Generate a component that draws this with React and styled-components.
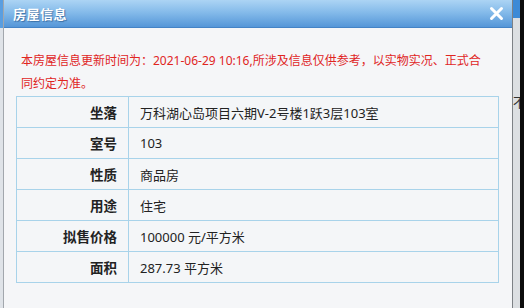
import styled, { createGlobalStyle } from "styled-components";

const GlobalStyle = createGlobalStyle`
  html, body {
    margin: 0;
    padding: 0;
    height: 100%;
    overflow: hidden;
  }
  body {
    font-family: "Noto Sans", "Noto Sans CJK SC", sans-serif;
    background: #e9ecef;
  }
`;

const rows = [
  { label: "坐落", value: "万科湖心岛项目六期V-2号楼1跃3层103室" },
  { label: "室号", value: "103" },
  { label: "性质", value: "商品房" },
  { label: "用途", value: "住宅" },
  { label: "拟售价格", value: "100000 元/平方米" },
  { label: "面积", value: "287.73 平方米" },
];

const CloseIcon = () => (
  <svg width="15" height="15" viewBox="0 0 15 15">
    <path
      d="M2.5 2.5 L12.5 12.5 M12.5 2.5 L2.5 12.5"
      stroke="#fff"
      strokeWidth="3"
      strokeLinecap="round"
    />
  </svg>
);

const App = () => {
  return (
    <>
      <GlobalStyle />
      <Page>
        <LeftEdge />
        <Dialog>
          <TitleBar>
            <Title>房屋信息</Title>
            <CloseButton>
              <CloseIcon />
            </CloseButton>
          </TitleBar>
          <Body>
            <Notice>
              本房屋信息更新时间为：2021-06-29 10:16,所涉及信息仅供参考，以实物实况、正式合
              <br />
              同约定为准。
            </Notice>
            <InfoTable>
              <tbody>
                {rows.map((row) => (
                  <tr key={row.label}>
                    <Label>{row.label}</Label>
                    <Value>{row.value}</Value>
                  </tr>
                ))}
              </tbody>
            </InfoTable>
          </Body>
        </Dialog>
        <SideStrip>
          <SideTop />
          <SideGlyph>不</SideGlyph>
        </SideStrip>
        <DarkBar />
      </Page>
    </>
  );
};

const Page = styled.div`
  display: flex;
  height: 308px;
  width: 524px;
`;

const LeftEdge = styled.div`
  width: 3px;
  background: linear-gradient(to bottom, #5a9ee0 0, #5a9ee0 28px, #dfe3e8 28px);
`;

const Dialog = styled.div`
  width: 508px;
  display: flex;
  flex-direction: column;
  background: #f5f6f8;
  border-left: 1px solid #a2a7ad;
  border-right: 1px solid #7d8185;
`;

const TitleBar = styled.div`
  height: 27px;
  display: flex;
  align-items: center;
  justify-content: space-between;
  padding: 0 8px 0 9px;
  background: linear-gradient(to bottom, #acd4f4 0%, #85bbea 45%, #5596d8 100%);
  border-bottom: 1px solid #4483c6;
`;

const Title = styled.span`
  color: #fff;
  font-size: 13px;
  font-weight: bold;
  text-shadow: 1px 1px 1px #3b6fa5;
  letter-spacing: 0.5px;
`;

const CloseButton = styled.span`
  display: flex;
  align-items: center;
  margin-top: -1px;
`;

const Body = styled.div`
  padding: 21px 12px 0 12px;
`;

const Notice = styled.p`
  margin: 0 0 1px 0;
  padding-left: 5px;
  color: #e0251f;
  font-size: 12px;
  line-height: 23px;
  white-space: nowrap;
`;

const InfoTable = styled.table`
  width: 483px;
  border-collapse: collapse;
  background: #f4f6f8;
  td {
    border: 1px solid #a8d3ea;
    height: 30px;
    padding: 0 11px;
    font-size: 13px;
    color: #222;
  }
`;

const Label = styled.td`
  width: 89px;
  text-align: right;
  font-weight: bold;
  font-size: 13.5px !important;
`;

const Value = styled.td`
  text-align: left;
`;

const SideStrip = styled.div`
  width: 7px;
  background: #dcdfe2;
  display: flex;
  flex-direction: column;
  overflow: hidden;
`;

const SideTop = styled.div`
  height: 18px;
  background: #3d8ad6;
`;

const SideGlyph = styled.span`
  margin-top: 74px;
  font-size: 13px;
  color: #333;
  font-family: "Noto Sans CJK SC", sans-serif;
`;

const DarkBar = styled.div`
  flex: 1;
  background: #0c0c0c;
`;

export default App;
